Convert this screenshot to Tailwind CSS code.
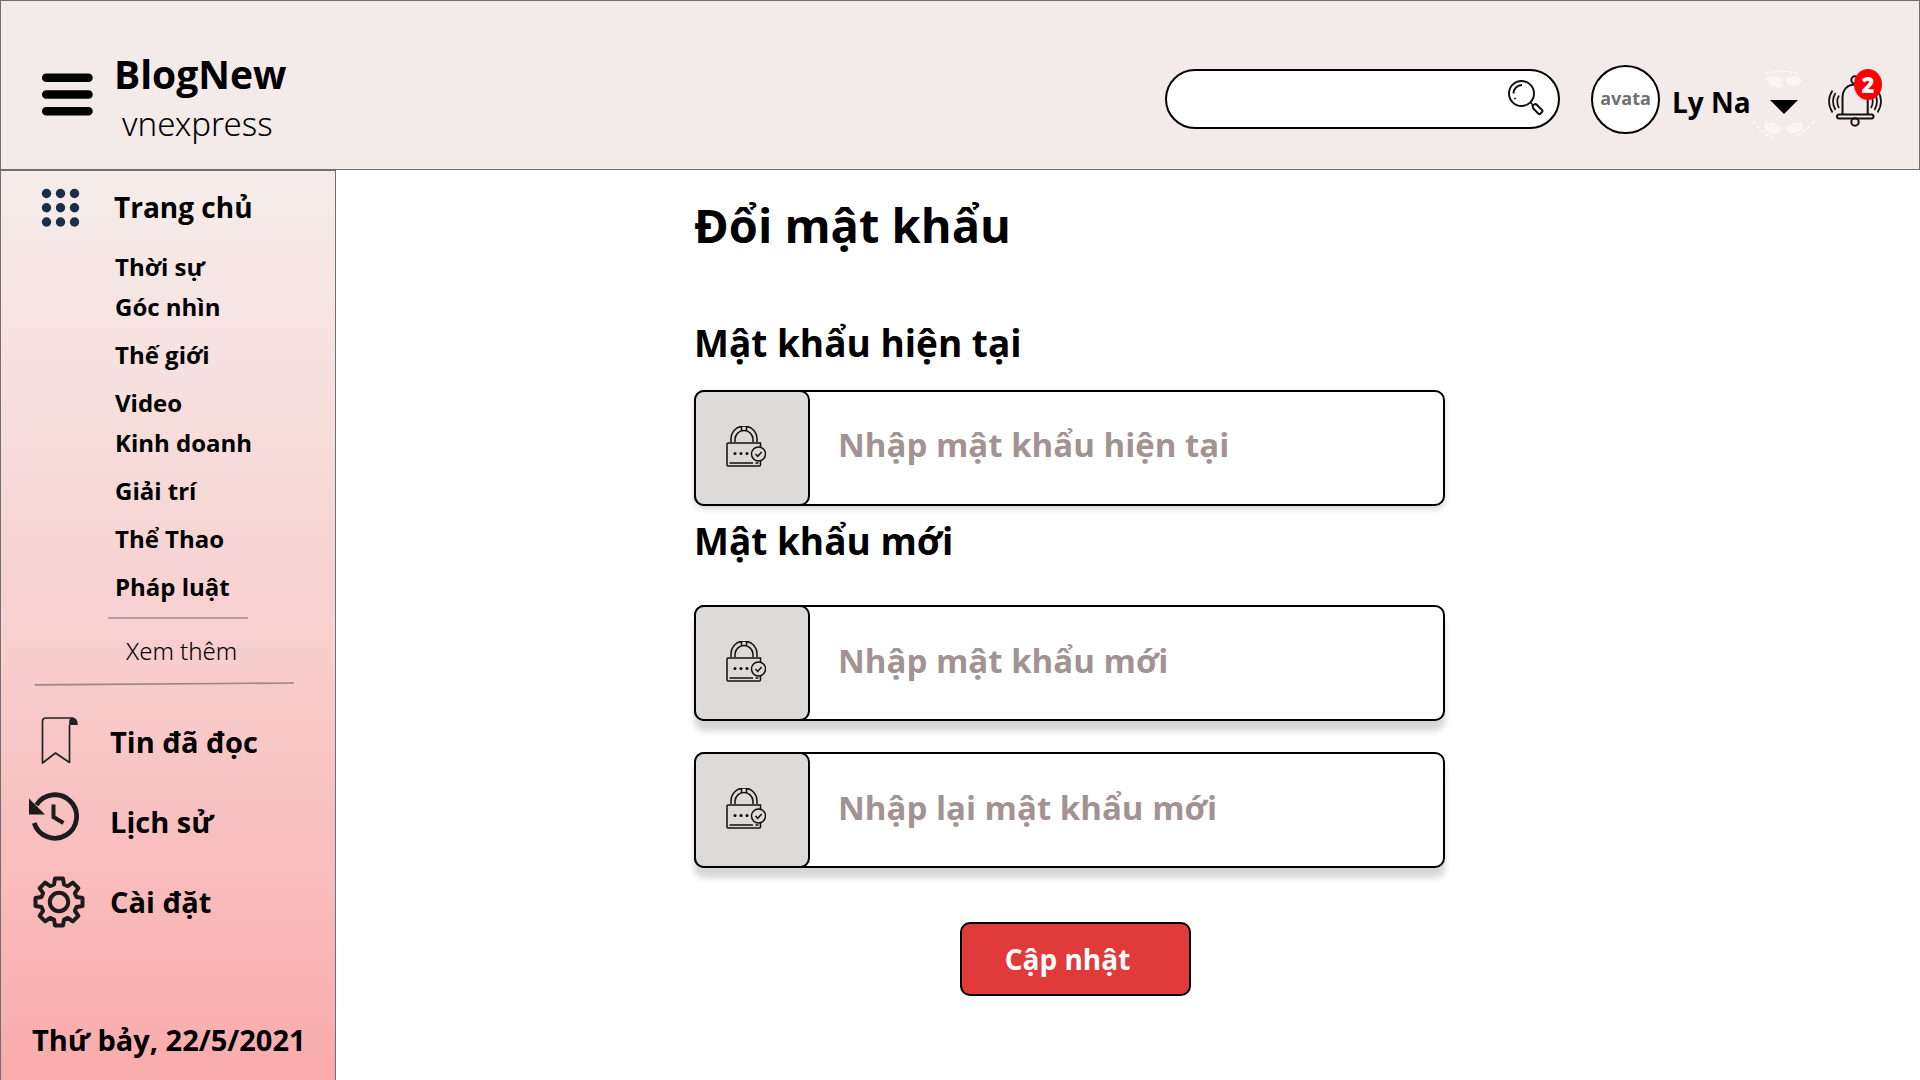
<!DOCTYPE html>
<html lang="vi">
<head>
<meta charset="utf-8">
<title>BlogNew – Đổi mật khẩu</title>
<script src="https://cdn.jsdelivr.net/npm/@tailwindcss/browser@4"></script>
</head>
<body class="flex min-h-screen flex-col bg-white font-['Open_Sans','Noto_Sans',sans-serif] text-black">

<svg class="hidden" aria-hidden="true">
  <symbol id="lock" viewBox="0 0 40 41">
    <g fill="none" stroke="#111" stroke-width="1.5">
      <path d="M5 16V13a12.5 12.5 0 0 1 26 0V16M9 16V13.500a9 9 0 0 1 18 0V16M15.500 1v4M20.500 1v4"/>
      <path d="M34.500 34V39q0 1-1 1H2q-1 0-1-1V18q0-1 1-1H34.500V21"/>
      <path d="M3.500 37H27M29.500 37H32.500"/>
    </g>
    <circle cx="32.500" cy="28" r="7" fill="#dddada" stroke="#111" stroke-width="1.500"/>
    <path d="M29.500 28l2.200 2.300 4-4.300" fill="none" stroke="#111" stroke-width="1.500"/>
    <circle cx="9" cy="27.500" r="1.500"/><circle cx="15" cy="27.500" r="1.500"/><circle cx="21" cy="27.500" r="1.500"/>
  </symbol>
</svg>

<header class="flex h-[170px] items-center border border-[#707070] bg-[#f3eaea] pt-7 pr-[37px] pl-10">
  <button type="button" aria-label="Menu" class="pb-2.5">
    <svg class="block h-[43px] w-[52px]" viewBox="0 0 52 43"><g stroke="#000" stroke-width="8.500" stroke-linecap="round"><path d="M5.200 4.700H47.500M5.200 21.500H47.500M5.200 38.300H47.500"/></g></svg>
  </button>
  <div class="ml-[21px] flex flex-col gap-0.5">
    <a href="#" class="text-[39px] leading-[48px] font-bold">BlogNew</a>
    <span class="pl-2 text-[33px] leading-[48px] font-[340] font-['Noto_Sans']">vnexpress</span>
  </div>

  <div class="ml-auto flex items-center">
    <form class="flex h-[60px] w-[395px] items-center rounded-full border-2 border-black bg-white pr-3.5 pl-6">
      <input type="search" aria-label="Tìm kiếm" class="min-w-0 flex-1 text-2xl outline-none">
      <button type="button" aria-label="Tìm">
        <svg class="block h-[38px] w-[36px]" viewBox="0 0 36 38" fill="none" stroke="#111">
          <circle cx="13.500" cy="13.500" r="12.500" stroke-width="2"/>
          <path d="M5.500 13.500a8.500 8.500 0 0 1 8.500-8.500" stroke-width="2"/>
          <circle cx="7" cy="18.500" r=".6" fill="#111"/>
          <path d="M22.500 22.500l3 3" stroke-width="1.500"/>
          <path d="M24.500 25.500l2.500-1.500 1.500.5 5.500 5.500q1 1 0 2l-1.500 1.700q-1 .8-2 0l-5.200-5.200Z" stroke-width="2" stroke-linejoin="round"/>
        </svg>
      </button>
    </form>
    <div class="ml-[31px] flex size-[69px] items-center justify-center rounded-full border-2 border-black bg-white pb-0.5 text-[18px] font-bold text-[#707070]">avata</div>
    <button type="button" class="ml-3 flex w-[145px] items-center justify-between pt-1.5">
      <span class="text-[28px] leading-10 font-bold">Ly Na</span>
      <svg class="block h-[84px] w-[66px]" viewBox="0 0 66 84">
        <defs><pattern id="dots" width="3" height="3" patternUnits="userSpaceOnUse"><path d="M0 0h1.500v1.500H0ZM1.500 1.500H3V3H1.500Z" fill="#fff"/></pattern></defs>
        <path d="M14 18l6-2 12 2-1 5 2 3-5 2-9-3ZM35 18l8-2 8 3-2 6-8 1-6-4ZM14 62l8 1 9 5-3 4-7 3-7-5ZM51 62l-8 1-9 5 5 6 8-2 5-4Z" fill="url(#dots)"/>
        <path d="M14 14Q32 8 50 15M2 61Q12 75 24 79M63 61Q56 71 44 76" fill="none" stroke="#fff" stroke-width="1.200" stroke-dasharray="4 2"/>
        <path d="M19 40H47L33 54Z"/>
      </svg>
    </button>
    <button type="button" aria-label="Thông báo" class="relative ml-[11px]">
      <svg class="block h-[60px] w-[54px]" viewBox="0 0 54 60" fill="none" stroke="#111" stroke-width="2">
        <circle cx="27" cy="11" r="3.700"/>
        <path d="M14.500 45V29C14.500 20 20 15.500 27 15.500S39.700 20 39.700 29V45"/>
        <rect x="9" y="45.500" width="36.500" height="4" rx="2"/>
        <circle cx="27" cy="53" r="3.700"/>
        <path d="M4.500 21.500Q-2.500 32 4.500 43.500M7.500 24Q2.500 32 7.500 41M11 26.500Q7.500 32 11 39M49.500 21.500Q56.500 32 49.500 43.500M46.500 24Q51.500 32 46.500 41M43 26.500Q46.500 32 43 39" stroke-width="1.700"/>
      </svg>
      <span class="absolute top-0 right-0 flex h-[31px] w-7 items-center justify-center rounded-[50%] bg-[#f00] text-[22px] font-extrabold text-white">2</span>
    </button>
  </div>
</header>

<div class="flex flex-1">
  <aside class="flex w-[336px] shrink-0 flex-col border border-b-0 border-[#707070] bg-linear-to-b from-[#f5edeb] via-[#f7d0d0] to-[#f9abab] pt-4 pb-5">
    <a href="#" class="flex h-10 items-center pl-10">
      <svg class="block size-[39px]" viewBox="0 0 39 39" fill="#1a2e4a"><circle cx="5.500" cy="5.500" r="4.700"/><circle cx="19.500" cy="5.500" r="4.700"/><circle cx="33.500" cy="5.500" r="4.700"/><circle cx="5.500" cy="19.800" r="4.700"/><circle cx="19.500" cy="19.800" r="4.700"/><circle cx="33.500" cy="19.800" r="4.700"/><circle cx="5.500" cy="34" r="4.700"/><circle cx="19.500" cy="34" r="4.700"/><circle cx="33.500" cy="34" r="4.700"/></svg>
      <span class="ml-[34px] text-[28px] leading-10 font-bold">Trang chủ</span>
    </a>
    <ul class="mt-6 flex flex-col pl-[114px] text-[24px] leading-8 font-bold">
      <li><a href="#">Thời sự</a></li>
      <li class="mt-2"><a href="#">Góc nhìn</a></li>
      <li class="mt-4"><a href="#">Thế giới</a></li>
      <li class="mt-4"><a href="#">Video</a></li>
      <li class="mt-2"><a href="#">Kinh doanh</a></li>
      <li class="mt-4"><a href="#">Giải trí</a></li>
      <li class="mt-4"><a href="#">Thể Thao</a></li>
      <li class="mt-4"><a href="#">Pháp luật</a></li>
    </ul>
    <hr class="mt-3.5 ml-[107px] w-[140px] border-t-2 border-[#b39f9f]">
    <a href="#" class="mt-4 pl-[125px] text-[24px] leading-8 font-[340] font-['Noto_Sans']">Xem thêm</a>
    <svg class="mt-[15px] ml-[34px] block h-1 w-[260px]" viewBox="0 0 260 4"><path d="M0 2.800L259 1" stroke="#9b8686" stroke-width="1.700"/></svg>
    <nav class="mt-4 flex flex-col text-[29px] leading-10 font-bold">
      <a href="#" class="flex h-20 items-center">
        <span class="flex w-[109px] pl-10"><svg class="block h-[50px] w-[38px]" viewBox="0 0 38 50"><path d="M28.500 8V45.500L14.500 36 1.500 46V4.500Q1.500 1 5 1H32M28.500 46V8" fill="none" stroke="#222" stroke-width="1.700" stroke-linejoin="round"/><path d="M28.200 8V5Q28 .5 32 .5Q36.800 1 36.800 8Z" fill="#222"/></svg></span>
        <span>Tin đã đọc</span>
      </a>
      <a href="#" class="flex h-20 items-center">
        <span class="flex w-[109px] pl-7"><svg class="block h-[60px] w-[50px]" viewBox="0 0 50 60"><path d="M7.500 13A21.700 21.700 0 1 1 5.200 31" fill="none" stroke="#1c1c1c" stroke-width="4.800"/><path d="M0 6.500L16 22.500H0Z" fill="#1c1c1c"/><path d="M24.500 12.500V25L34.500 31" fill="none" stroke="#1c1c1c" stroke-width="4"/></svg></span>
        <span>Lịch sử</span>
      </a>
      <a href="#" class="flex h-20 items-center">
        <span class="flex w-[109px] pl-8"><svg class="block size-[52px]" viewBox="-26 -26 52 52" fill="none" stroke="#1c1c1c" stroke-width="4" stroke-linejoin="round"><circle r="9.200"/><path d="M-5-17.500L-4-23.500 4-23.500 5-17.500 8.800-15.900 13.800-19.400 19.400-13.800 15.900-8.800 17.500-5 23.500-4 23.500 4 17.500 5 15.900 8.800 19.400 13.800 13.800 19.400 8.800 15.900 5 17.500 4 23.500-4 23.500-5 17.500-8.800 15.900-13.800 19.400-19.400 13.800-15.900 8.800-17.500 5-23.500 4-23.500-4-17.500-5-15.900-8.800-19.400-13.800-13.800-19.400-8.800-15.900Z"/></svg></span>
        <span>Cài đặt</span>
      </a>
    </nav>
    <p class="mt-auto pl-[31px] text-[29px] leading-10 font-bold">Thứ bảy, 22/5/2021</p>
  </aside>

  <main class="flex-1 pt-[23px] pr-6 pl-[358px]">
    <form class="flex w-full max-w-[751px] flex-col">
      <h1 class="text-[47px] leading-[64px] font-bold">Đổi mật khẩu</h1>
      <label for="current" class="mt-[62px] text-[37px] leading-[48px] font-bold">Mật khẩu hiện tại</label>
      <div class="mt-[23px] flex h-[116px] rounded-[10px] border-2 border-black bg-white shadow-[0_3px_6px_#00000029]">
        <span class="-m-0.5 flex w-[116px] shrink-0 items-center justify-center rounded-[10px] border-2 border-black bg-[#dddada] pr-3 pb-1"><svg class="block h-[41px] w-10"><use href="#lock"/></svg></span>
        <input id="current" type="text" placeholder="Nhập mật khẩu hiện tại" class="min-w-0 flex-1 pr-4 pb-1.5 pl-[30px] text-[33px] font-bold outline-none placeholder:text-[#a29393]">
      </div>
      <label for="new" class="mt-[11px] text-[37px] leading-[48px] font-bold">Mật khẩu mới</label>
      <div class="mt-10 flex h-[116px] rounded-[10px] border-2 border-black bg-white shadow-[0_10px_6px_#00000029]">
        <span class="-m-0.5 flex w-[116px] shrink-0 items-center justify-center rounded-[10px] border-2 border-black bg-[#dddada] pr-3 pb-1"><svg class="block h-[41px] w-10"><use href="#lock"/></svg></span>
        <input id="new" type="text" placeholder="Nhập mật khẩu mới" class="min-w-0 flex-1 pr-4 pb-1 pl-[30px] text-[33px] font-bold outline-none placeholder:text-[#a29393]">
      </div>
      <div class="mt-[31px] flex h-[116px] rounded-[10px] border-2 border-black bg-white shadow-[0_10px_6px_#00000029]">
        <span class="-m-0.5 flex w-[116px] shrink-0 items-center justify-center rounded-[10px] border-2 border-black bg-[#dddada] pr-3 pb-1"><svg class="block h-[41px] w-10"><use href="#lock"/></svg></span>
        <input type="text" aria-label="Nhập lại mật khẩu mới" placeholder="Nhập lại mật khẩu mới" class="min-w-0 flex-1 pr-4 pb-1 pl-[30px] text-[33px] font-bold outline-none placeholder:text-[#a29393]">
      </div>
      <button type="submit" class="mt-[54px] ml-[266px] h-[74px] w-[231px] rounded-[10px] border-2 border-black bg-[#e03a3a] pr-4 text-[28px] font-bold text-white">Cập nhật</button>
    </form>
  </main>
</div>
</body>
</html>
